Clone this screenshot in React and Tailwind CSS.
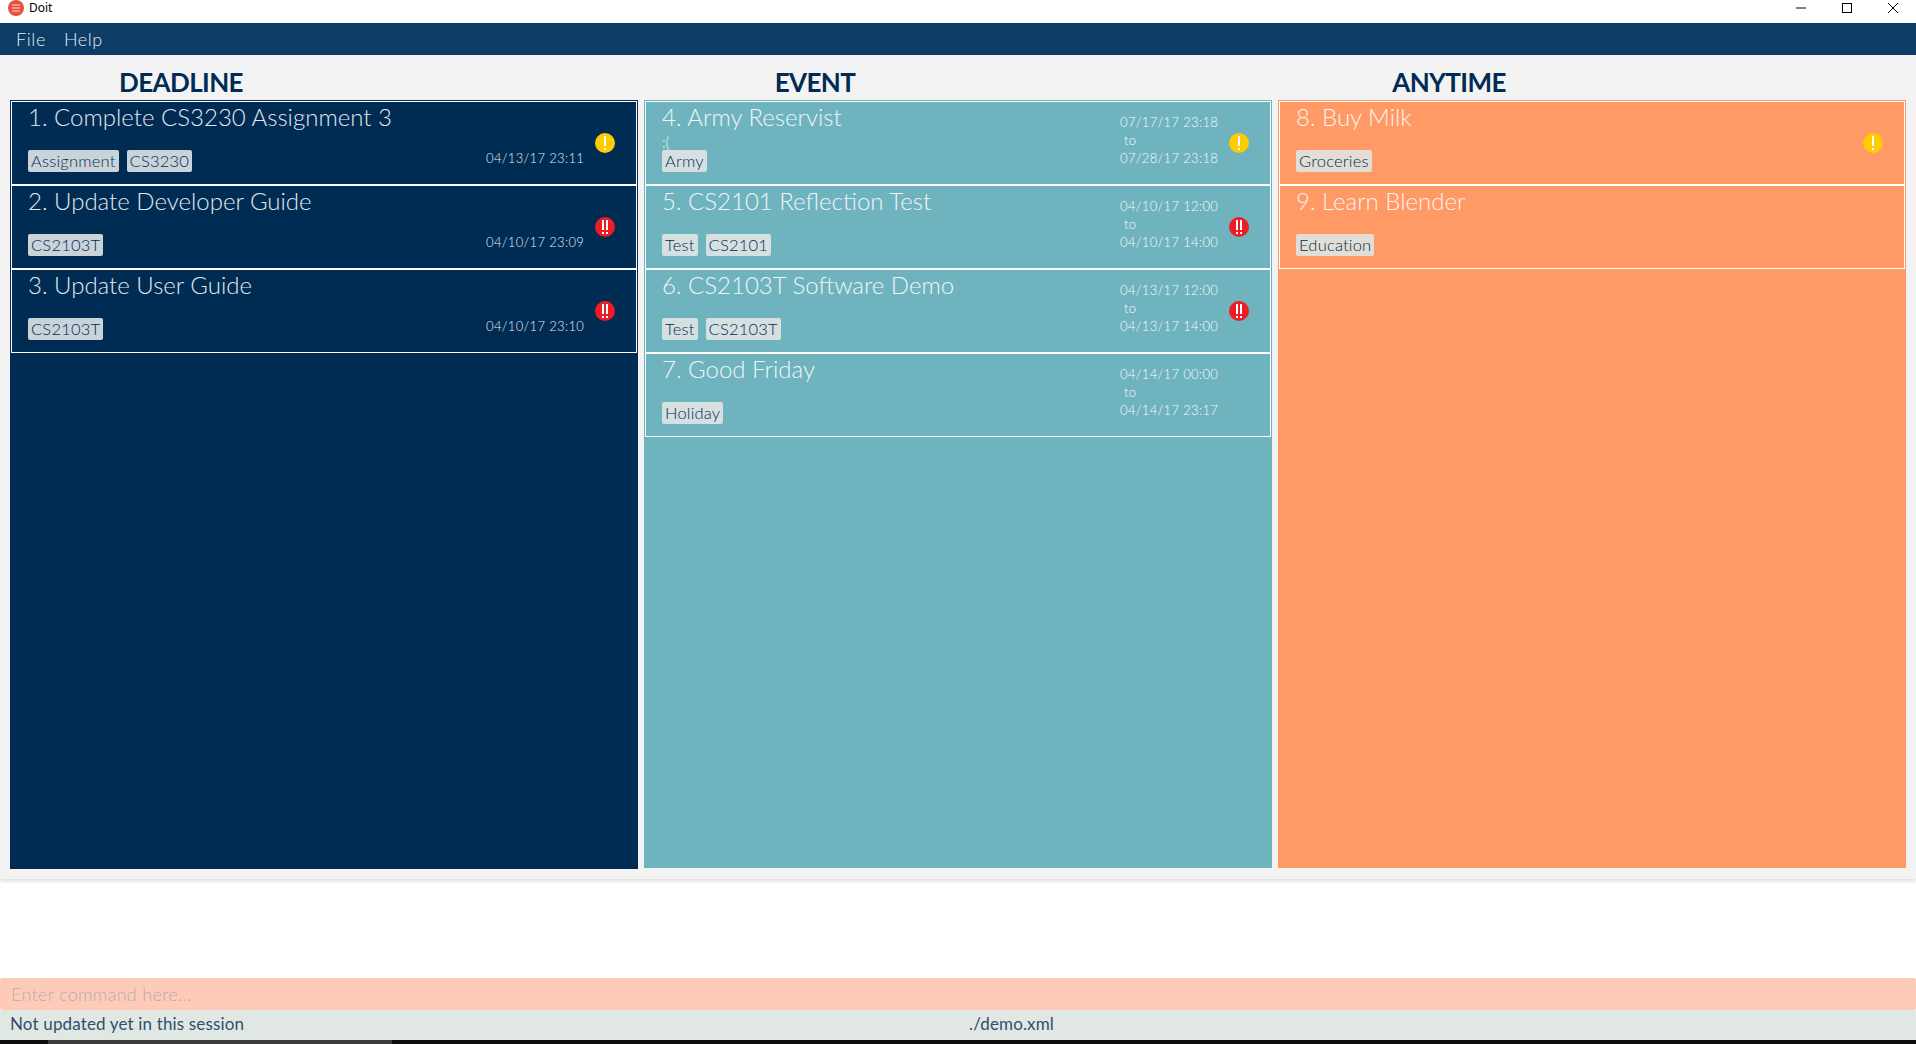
const FONT = "font-['Lato','Open_Sans',sans-serif]";

const COLUMNS = [
  {
    name: 'DEADLINE',
    panel: 'bg-[#002c54] border-[#002c54]',
    text: 'text-[#e2e8ee]',
    date: 'text-[#e4eaef]',
    tag: 'bg-[#c9d3d9]',
    cards: [
      { title: '1. Complete CS3230 Assignment 3', tags: ['Assignment', 'CS3230'], date: ['04/13/17 23:11'], level: 1 },
      { title: '2. Update Developer Guide', tags: ['CS2103T'], date: ['04/10/17 23:09'], level: 2 },
      { title: '3. Update User Guide', tags: ['CS2103T'], date: ['04/10/17 23:10'], level: 2 },
    ],
  },
  {
    name: 'EVENT',
    panel: 'bg-[#6fb3bf] border-[#6fb3bf] mb-[1px]',
    text: 'text-[#f0f6f6]',
    date: 'text-[#f8fbfb]',
    tag: 'bg-[#d6e0e1]',
    cards: [
      { title: '4. Army Reservist', desc: ':(', tags: ['Army'], date: ['07/17/17 23:18', 'to', '07/28/17 23:18'], level: 1 },
      { title: '5. CS2101 Reflection Test', tags: ['Test', 'CS2101'], date: ['04/10/17 12:00', 'to', '04/10/17 14:00'], level: 2 },
      { title: '6. CS2103T Software Demo', tags: ['Test', 'CS2103T'], date: ['04/13/17 12:00', 'to', '04/13/17 14:00'], level: 2 },
      { title: '7. Good Friday', tags: ['Holiday'], date: ['04/14/17 00:00', 'to', '04/14/17 23:17'], level: 0 },
    ],
  },
  {
    name: 'ANYTIME',
    panel: 'bg-[#ff9966] border-[#ff9966] mb-[1px]',
    text: 'text-[#fdf3ec]',
    date: 'text-[#fdf0e8]',
    tag: 'bg-[#e2ded5]',
    cards: [
      { title: '8. Buy Milk', tags: ['Groceries'], date: [], level: 1 },
      { title: '9. Learn Blender', tags: ['Education'], date: [], level: 0 },
    ],
  },
];

function Badge({ level }) {
  if (!level) return <div className="w-5 h-5" />;
  return (
    <div className={`w-5 h-5 rounded-full flex items-center justify-center gap-[2px] ${level === 1 ? 'bg-[#ffcc00]' : 'bg-[#ee1c25]'}`}>
      {Array.from({ length: level }).map((_, i) => (
        <div key={i} className="flex flex-col items-center gap-[2px]">
          <div className="w-[2px] h-[10px] bg-white" />
          <div className="w-[2px] h-[2px] bg-white" />
        </div>
      ))}
    </div>
  );
}

function Card({ card, col }) {
  return (
    <div className="h-[84px] border border-white flex shrink-0">
      <div className="flex-1 min-w-0 pl-[16px] flex flex-col">
        <div className={`h-[32px] text-[24px] leading-[30px] font-light whitespace-nowrap ${col.text}`}>{card.title}</div>
        <div className={`h-[16px] text-[15px] leading-[16px] font-light ${col.text}`}>{card.desc}</div>
        <div className="flex gap-[8px]">
          {card.tags.map(t => (
            <span key={t} className={`h-[22px] px-[3px] rounded-[2px] text-[16.5px] leading-[22px] font-light tracking-[0.2px] text-[#002c54] ${col.tag}`}>{t}</span>
          ))}
        </div>
      </div>
      <div className={`w-[97px] flex flex-col justify-center ${col.date} text-[13px] leading-[18px] font-light tracking-[0.35px] whitespace-nowrap`}>
        {card.date.length === 1 && <div className="mt-[30px]">{card.date[0]}</div>}
        {card.date.length === 3 && (
          <div className="mt-[-6px]">
            <div>{card.date[0]}</div>
            <div className="pl-[4px]">{card.date[1]}</div>
            <div>{card.date[2]}</div>
          </div>
        )}
      </div>
      <div className="w-[53px] flex pl-[12px] pt-[31px] shrink-0">
        <Badge level={card.level} />
      </div>
    </div>
  );
}

function Column({ col }) {
  return (
    <div className="flex flex-col flex-1 min-w-0">
      <div className="w-[342px] h-[34px] text-center text-[26px] leading-[33px] font-bold tracking-[-0.6px] text-[#002c54]">{col.name}</div>
      <div className={`flex-1 border flex flex-col ${col.panel}`}>
        {col.cards.map(c => <Card key={c.title} card={c} col={col} />)}
      </div>
    </div>
  );
}

export default function App() {
  return (
    <div className={`h-screen flex flex-col overflow-hidden bg-white ${FONT}`}>
      {/* window title bar */}
      <div className="h-[23px] shrink-0 bg-white flex items-center overflow-hidden relative">
        <svg width="16" height="16" viewBox="0 0 16 16" className="ml-[8px] mt-[-8px]">
          <circle cx="8" cy="8" r="8" fill="#e8503f" />
          <path d="M4 5h8M4 8h8M4 11h8" stroke="#fbd5d0" strokeWidth="1.2" />
        </svg>
        <span className="ml-[5px] mt-[-7px] text-[12px] font-['Noto_Sans',sans-serif] text-black">Doit</span>
        <div className="ml-auto flex items-center mt-[-8px]">
          <svg width="10" height="2" className="mr-[36px]"><path d="M0 1h10" stroke="#000" /></svg>
          <svg width="10" height="10" className="mr-[36px]"><rect x="0.5" y="0.5" width="9" height="9" fill="none" stroke="#000" /></svg>
          <svg width="10" height="10" className="mr-[18px]"><path d="M0 0l10 10M10 0L0 10" stroke="#000" /></svg>
        </div>
      </div>
      {/* menu */}
      <div className="h-[32px] shrink-0 bg-[#0d3c67] flex items-center pl-[16px] gap-[18px] text-[18px] font-light tracking-[0.6px] text-[#e6ecf1]">
        <span>File</span>
        <span>Help</span>
      </div>
      {/* task panels */}
      <div className="h-[824px] shrink-0 bg-[#f3f3f3] flex gap-[6px] px-[10px] pt-[11px] pb-[10px] shadow-[0_2px_4px_rgba(0,0,0,0.15)] relative">
        {COLUMNS.map(col => <Column key={col.name} col={col} />)}
      </div>
      <div className="flex-1 bg-white" />
      {/* command box */}
      <div className="h-[32px] shrink-0 bg-[#fecbb9] rounded-[2px] flex items-center pl-[11px] text-[18px] font-light tracking-[0.3px] text-[#b5aeaa]">
        Enter command here...
      </div>
      {/* status bar */}
      <div className="h-[30px] shrink-0 bg-[#e1e8e3] flex items-center text-[17px] leading-[26px] tracking-[0.15px] text-[#2f4f6f] relative pb-[2px]">
        <span className="pl-[10px]">Not updated yet in this session</span>
        <span className="absolute left-[969px]">./demo.xml</span>
      </div>
      <div className="h-[4px] shrink-0 bg-[#0e0e0e] pl-[48px]">
        <div className="h-full w-[344px] bg-[#3c3c3c]" />
      </div>
    </div>
  );
}
